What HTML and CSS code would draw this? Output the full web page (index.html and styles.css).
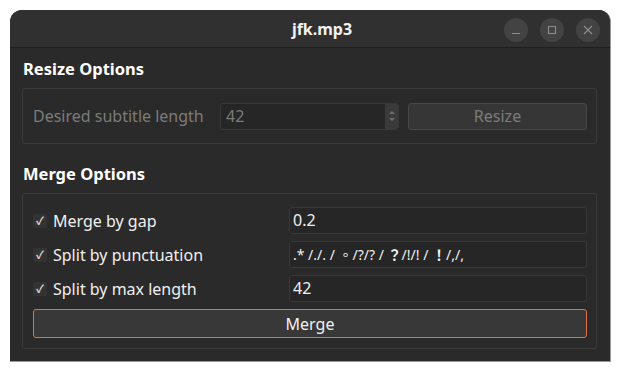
FILE: index.html
```html
<!DOCTYPE html>
<html>
<head>
	<title>jfk.mp3</title>
	<meta charset="utf-8">
	<link rel="stylesheet" href="styles.css">
</head>
<body>

	<div class="window">
		<div class="titlebar">
			<span class="title">jfk.mp3</span>
			<div class="controls">
				<span class="ctl">
					<svg width="10" height="10" viewBox="0 0 10 10"><path d="M1 8.5h8" stroke="#8c8c8c" stroke-width="1.2"/></svg>
				</span>
				<span class="ctl">
					<svg width="10" height="10" viewBox="0 0 10 10"><rect x="1.5" y="1.5" width="7" height="7" fill="none" stroke="#8c8c8c" stroke-width="1.1"/></svg>
				</span>
				<span class="ctl">
					<svg width="10" height="10" viewBox="0 0 10 10"><path d="M1 1l8 8M9 1l-8 8" stroke="#8c8c8c" stroke-width="1.2"/></svg>
				</span>
			</div>
		</div>

		<div class="content">
			<h2>Resize Options</h2>
			<div class="group resize">
				<span class="label disabled">Desired subtitle length</span>
				<div class="spin">
					<span class="spin-value">42</span>
					<span class="spin-arrows">
						<svg width="8" height="20" viewBox="0 0 8 20"><path d="M1 8l3-3 3 3z M1 12l3 3 3-3z" fill="#6e6e6e"/></svg>
					</span>
				</div>
				<button class="btn btn-resize">Resize</button>
			</div>

			<h2>Merge Options</h2>
			<div class="group merge">
				<div class="row">
					<label class="check"><span class="box">&#10003;</span>Merge by gap</label>
					<div class="field">0.2</div>
				</div>
				<div class="row">
					<label class="check"><span class="box">&#10003;</span>Split by punctuation</label>
					<div class="field punct">.* /./. / 。/?/? / <b>？</b>/!/! / <b>！</b>/,/,</div>
				</div>
				<div class="row">
					<label class="check"><span class="box">&#10003;</span>Split by max length</label>
					<div class="field">42</div>
				</div>
				<button class="btn btn-merge">Merge</button>
			</div>
		</div>
	</div>

</body>
</html>
```

FILE: styles.css
```css
*,
*:before,
*:after {
	box-sizing: border-box;
}

body {
	margin: 0;
	background-color: #ffffff;
	font-family: "Noto Sans", "Noto Sans CJK TC", sans-serif;
}

.window {
	margin: 10px 11px 0 10px;
	height: 352px;
	background-color: #2a2a2a;
	border-radius: 12px 12px 0 0;
	border-right: 1px solid #9a9a9a;
	border-bottom: 1px solid #9a9a9a;
	overflow: hidden;
}

.titlebar {
	height: 38px;
	padding-left: 24px;
	background-color: #303030;
	border-bottom: 1px solid #1f1f1f;
	display: flex;
	align-items: center;
	justify-content: center;
	position: relative;
}

.title {
	color: #f2f2f2;
	font-weight: bold;
	font-size: 16px;
}

.controls {
	position: absolute;
	right: 10px;
	top: 8px;
	display: flex;
	gap: 12px;
}

.ctl {
	width: 24px;
	height: 24px;
	border-radius: 50%;
	background-color: #434343;
	display: flex;
	align-items: center;
	justify-content: center;
}

.content {
	padding: 10px 13px 0 12px;
}

h2 {
	margin: 0 0 8px 1px;
	color: #ffffff;
	font-size: 16.5px;
	font-weight: bold;
	line-height: 22px;
}

.group {
	border: 1px solid #3a3a3a;
	border-radius: 3px;
	margin-bottom: 19px;
}

.resize {
	display: flex;
	align-items: center;
	height: 56px;
	padding: 0 9px 0 10px;
}

.label {
	font-size: 16px;
	width: 187px;
}

.disabled {
	color: #7b7b7b;
}

.spin {
	width: 179px;
	height: 27px;
	background-color: #262626;
	border: 1px solid #383838;
	border-radius: 3px;
	display: flex;
	align-items: center;
	justify-content: space-between;
	padding-left: 5px;
	color: #7b7b7b;
	font-size: 16px;
}

.spin-arrows {
	width: 13px;
	height: 25px;
	background-color: #3a3a3a;
	border-radius: 0 2px 2px 0;
	display: flex;
	align-items: center;
	justify-content: center;
}

.btn {
	font-family: inherit;
	background-color: #363636;
	border: 1px solid #474747;
	border-radius: 3px;
	font-size: 16px;
}

.btn-resize {
	margin-left: 9px;
	flex: 1;
	height: 27px;
	color: #7b7b7b;
	padding: 0;
}

.merge {
	display: flex;
	flex-direction: column;
	gap: 7px;
	padding: 13px 9px 10px 10px;
}

.row {
	display: flex;
	align-items: center;
}

.check {
	width: 256px;
	color: #f0f0f0;
	font-size: 16px;
	display: flex;
	align-items: center;
}

.box {
	width: 14px;
	height: 14px;
	margin-right: 6px;
	background-color: #333333;
	border-radius: 2px;
	color: #d8d8d8;
	font-size: 11px;
	font-weight: bold;
	line-height: 14px;
	text-align: center;
}

.field {
	flex: 1;
	height: 27px;
	background-color: #262626;
	border: 1px solid #383838;
	border-radius: 3px;
	padding-left: 3px;
	color: #f0f0f0;
	font-size: 16px;
	line-height: 25px;
	white-space: nowrap;
	overflow: hidden;
}

.punct {
	font-size: 14px;
}

.btn-merge {
	height: 29px;
	color: #f0f0f0;
	border-color: #e2703f;
	background-color: #383838;
	padding: 0;
}
```
